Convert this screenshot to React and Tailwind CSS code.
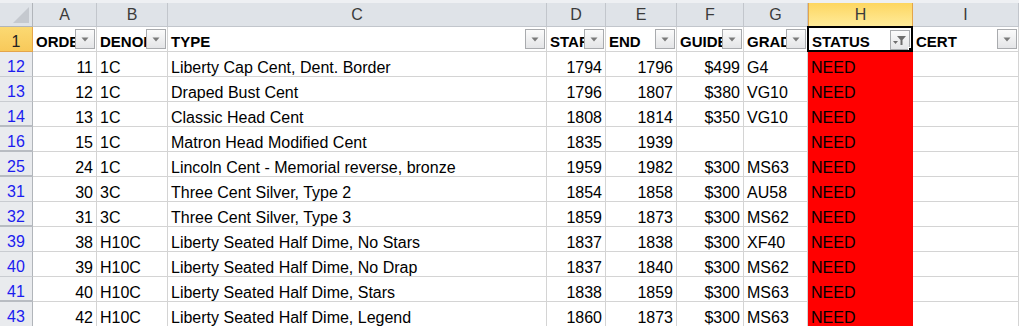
import React from 'react';

const cols = [
  { key: 'A', title: 'ORDER', align: 'right' },
  { key: 'B', title: 'DENOM', align: 'left' },
  { key: 'C', title: 'TYPE', align: 'left' },
  { key: 'D', title: 'START', align: 'right' },
  { key: 'E', title: 'END', align: 'right' },
  { key: 'F', title: 'GUIDE', align: 'right' },
  { key: 'G', title: 'GRADE', align: 'left' },
  { key: 'H', title: 'STATUS', align: 'left' },
  { key: 'I', title: 'CERT', align: 'left' },
];

const rows = [
  [12, 11, '1C', 'Liberty Cap Cent, Dent. Border', 1794, 1796, '$499', 'G4'],
  [13, 12, '1C', 'Draped Bust Cent', 1796, 1807, '$380', 'VG10'],
  [14, 13, '1C', 'Classic Head Cent', 1808, 1814, '$350', 'VG10', true],
  [16, 15, '1C', 'Matron Head Modified Cent', 1835, 1939, '', '', true],
  [25, 24, '1C', 'Lincoln Cent - Memorial reverse, bronze', 1959, 1982, '$300', 'MS63', true],
  [31, 30, '3C', 'Three Cent Silver, Type 2', 1854, 1858, '$300', 'AU58'],
  [32, 31, '3C', 'Three Cent Silver, Type 3', 1859, 1873, '$300', 'MS62', true],
  [39, 38, 'H10C', 'Liberty Seated Half Dime, No Stars', 1837, 1838, '$300', 'XF40'],
  [40, 39, 'H10C', 'Liberty Seated Half Dime, No Drap', 1837, 1840, '$300', 'MS62'],
  [41, 40, 'H10C', 'Liberty Seated Half Dime, Stars', 1838, 1859, '$300', 'MS63', true],
  [43, 42, 'H10C', 'Liberty Seated Half Dime, Legend', 1860, 1873, '$300', 'MS63'],
];

const grid = 'grid grid-cols-[33px_64px_71px_379px_59px_71px_67px_64px_105px_106px]';

function DropBtn({ filter }) {
  return (
    <div className="absolute right-[1px] top-[2px] w-[20px] h-[20px] border border-[#a9abae] bg-linear-to-b from-[#fbfbfb] to-[#e4e5e7] flex items-center justify-center">
      {filter ? (
        <svg width="14" height="12" viewBox="0 0 14 12">
          <path d="M4 2h9l-3.5 4v5h-2V6z" fill="#6e6e6e" />
          <path d="M0 7h5l-2.5 3z" fill="#6e6e6e" />
        </svg>
      ) : (
        <svg width="8" height="5" viewBox="0 0 8 5">
          <path d="M0.5 0.5h7L4 4.5z" fill="#7a7a7a" />
        </svg>
      )}
    </div>
  );
}

export default function App() {
  return (
    <div className="w-[1019px] h-[326px] overflow-hidden bg-white font-['Liberation_Sans',Arial,sans-serif] text-[16px] leading-[16px] text-black select-none">
      <div className="h-[3px] bg-[#eef0f3]" />
      {/* column letters */}
      <div className={`${grid} h-[24px]`}>
        <div className="relative bg-[#dfe3e8] border-r border-b border-[#b1b5ba]">
          <svg className="absolute right-[3px] bottom-[3px]" width="16" height="16" viewBox="0 0 16 16">
            <path d="M16 0V16H0z" fill="#c5c9cf" />
          </svg>
        </div>
        {cols.map((c) => (
          <div
            key={c.key}
            className={
              c.key === 'H'
                ? 'flex items-center justify-center pt-[1px] bg-linear-to-b from-[#fdd660] to-[#ffeb98] border-r border-l border-[#e4a54a] border-b border-b-[#e4a54a] text-[#3b3b3b]'
                : 'flex items-center justify-center pt-[1px] bg-[#dfe3e8] border-r border-b border-[#c2c6cc] text-[#3b3b3b]'
            }
          >
            {c.key}
          </div>
        ))}
      </div>
      {/* header row */}
      <div className={`${grid} h-[25px]`}>
        <div className="flex items-center justify-center pt-[6px] bg-linear-to-b from-[#fbd972] to-[#f8c95a] border-r border-b border-[#e4a54a] text-[#222]">
          1
        </div>
        {cols.map((c) => (
          <div
            key={c.key}
            className={
              c.key === 'H'
                ? 'relative flex items-center pl-[3px] pt-[5px] text-[15px] font-bold whitespace-nowrap overflow-hidden border-2 border-black -ml-[1px] -mt-[1px] h-[26px]'
                : 'relative flex items-center pl-[3px] pt-[6px] text-[15px] font-bold whitespace-nowrap overflow-hidden border-r border-b border-[#d4d4d4]'
            }
          >
            {c.title}
            <DropBtn filter={c.key === 'H'} />
            {c.key === 'H' && (
              <div className="absolute right-[-2px] bottom-[-2px] w-[5px] h-[5px] bg-black border border-white" />
            )}
          </div>
        ))}
      </div>
      {/* data rows */}
      {rows.map((r) => {
        const [num, order, denom, type, start, end, guide, grade, gap] = r;
        const cell = 'flex items-center px-[3px] pt-[7px] whitespace-nowrap overflow-hidden border-r border-b border-[#d4d4d4]';
        return (
          <div key={num} className={`${grid} h-[25px]`}>
            <div
              className={`flex items-center justify-center pt-[6px] bg-[#e9ebee] border-r border-[#b1b5ba] text-[#1c1cf0] ${
                gap ? 'border-b-2 border-b-[#b8bcc2]' : 'border-b border-b-[#c9ccd1]'
              }`}
            >
              {num}
            </div>
            <div className={`${cell} justify-end`}>{order}</div>
            <div className={cell}>{denom}</div>
            <div className={cell}>{type}</div>
            <div className={`${cell} justify-end`}>{start}</div>
            <div className={`${cell} justify-end`}>{end}</div>
            <div className={`${cell} justify-end`}>{guide}</div>
            <div className={cell}>{grade}</div>
            <div className="flex items-center px-[3px] pt-[7px] bg-[#ff0000]">NEED</div>
            <div className={cell} />
          </div>
        );
      })}
    </div>
  );
}
